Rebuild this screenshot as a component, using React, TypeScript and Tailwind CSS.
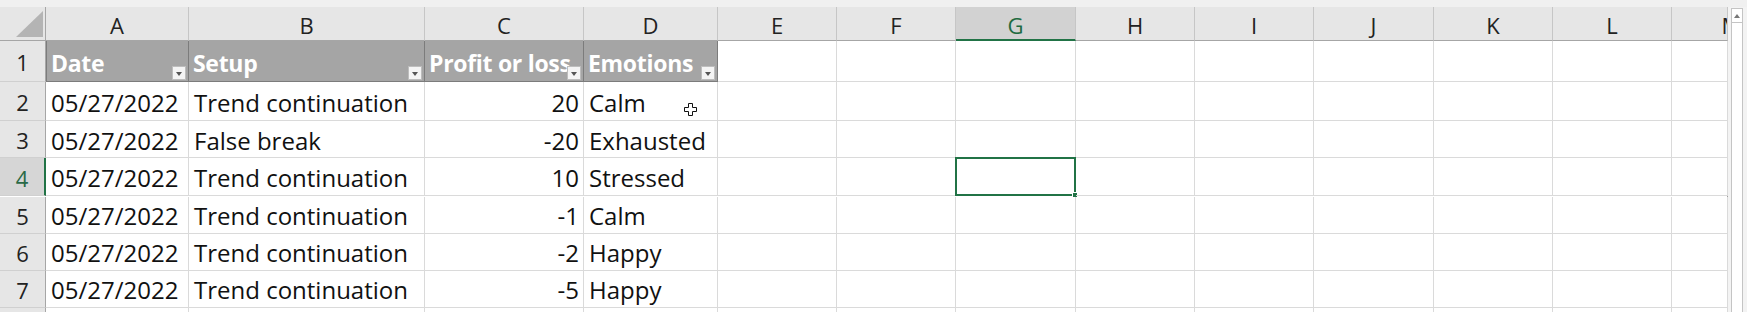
import React from "react";

const columns = [
  { label: "A", w: 143 },
  { label: "B", w: 236 },
  { label: "C", w: 159 },
  { label: "D", w: 134 },
  { label: "E", w: 119 },
  { label: "F", w: 119 },
  { label: "G", w: 120 },
  { label: "H", w: 119 },
  { label: "I", w: 119 },
  { label: "J", w: 120 },
  { label: "K", w: 119 },
  { label: "L", w: 119 },
  { label: "M", w: 56 },
];

const headers = ["Date", "Setup", "Profit or loss", "Emotions"];

const trades = [
  ["05/27/2022", "Trend continuation", "20", "Calm"],
  ["05/27/2022", "False break", "-20", "Exhausted"],
  ["05/27/2022", "Trend continuation", "10", "Stressed"],
  ["05/27/2022", "Trend continuation", "-1", "Calm"],
  ["05/27/2022", "Trend continuation", "-2", "Happy"],
  ["05/27/2022", "Trend continuation", "-5", "Happy"],
];

const rowHeights = ["h-[39px]", "h-[37px]", "h-[38px]", "h-[37px]", "h-[37px]", "h-[37px]"];

export default function App() {
  return (
    <div className="w-[1747px] h-[312px] overflow-hidden bg-[#f3f3f3] font-['Open_Sans',sans-serif] text-[#111]">
      <div className="h-[7px] bg-[#f0f0f0]" />
      <div className="flex">
        <div className="grid w-[1728px] grid-cols-[46px_143px_236px_159px_134px_119px_119px_120px_119px_119px_120px_119px_119px_56px] border-r border-[#9e9e9e] bg-white">
          {/* column headers */}
          <div className="relative h-[34px] bg-[#e6e6e6] border-r border-b border-[#a6a6a6]">
            <svg className="absolute left-[16px] top-[4px]" width="28" height="27" viewBox="0 0 28 27">
              <polygon points="0,26 27,26 27,0" fill="#b4b4b4" />
            </svg>
          </div>
          {columns.map((c) => (
            <ColumnHeader key={c.label} label={c.label} selected={c.label === "G"} clip={c.label === "M"} />
          ))}

          {/* row 1: table header */}
          <RowNumber n={1} h="h-[41px]" />
          {headers.map((h, i) => (
            <div
              key={h}
              className={`relative h-[41px] bg-[#a5a5a5] border-r border-b border-[#7c7c7c] overflow-hidden ${i === 0 ? "border-l" : ""}`}
            >
              <div className="pl-[4px] pt-[7px] text-[23px] font-bold text-white whitespace-nowrap leading-[30px] tracking-[-0.3px]">
                {h}
              </div>
              <FilterButton />
            </div>
          ))}
          {columns.slice(4).map((c) => (
            <div key={c.label} className="h-[41px] border-r border-b border-[#dadada]" />
          ))}

          {/* rows 2-7 */}
          {trades.map((t, r) => (
            <React.Fragment key={r}>
              <RowNumber n={r + 2} h={rowHeights[r]} selected={r === 2} />
              <Cell h={rowHeights[r]}>{t[0]}</Cell>
              <Cell h={rowHeights[r]}>{t[1]}</Cell>
              <Cell h={rowHeights[r]} right>
                {t[2]}
              </Cell>
              <Cell h={rowHeights[r]}>
                {t[3]}
                {r === 0 && <CursorPlus />}
              </Cell>
              {columns.slice(4).map((c) => (
                <div key={c.label} className={`relative ${rowHeights[r]} border-r border-b border-[#dadada]`}>
                  {r === 2 && c.label === "G" && (
                    <div className="absolute -left-[1px] -top-[1px] -right-[1px] -bottom-[1px] border-2 border-[#217346]">
                      <div className="absolute -right-[4px] -bottom-[4px] w-[6px] h-[6px] bg-[#217346] border border-white" />
                    </div>
                  )}
                </div>
              ))}
            </React.Fragment>
          ))}

          {/* row 8, cut off */}
          <div className="h-[5px] bg-[#e6e6e6] border-r border-[#a6a6a6]" />
          {columns.map((c) => (
            <div key={c.label} className="h-[5px] border-r border-[#dadada]" />
          ))}
        </div>

        {/* vertical scrollbar */}
        <div className="ml-[3px] w-[12px] h-[305px] mt-[1px] bg-white border border-[#c4c4c4] flex flex-col">
          <div className="h-[14px] border-b border-[#c4c4c4] flex items-center justify-center">
            <svg width="6" height="4" viewBox="0 0 6 4">
              <polygon points="0,4 6,4 3,0" fill="#777" />
            </svg>
          </div>
        </div>
      </div>
    </div>
  );
}

function ColumnHeader({ label, selected, clip }: { label: string; selected?: boolean; clip?: boolean }) {
  return (
    <div
      className={`h-[34px] overflow-hidden border-r border-[#c6c6c6] ${
        selected ? "bg-[#d2d2d2] border-b-2 border-b-[#217346] text-[#1e6b41]" : "bg-[#e6e6e6] border-b border-b-[#a6a6a6] text-[#222]"
      }`}
    >
      <div className={`${clip ? "w-[119px]" : "w-full"} text-center text-[22px] leading-[34px] pt-[1px]`}>{label}</div>
    </div>
  );
}

function RowNumber({ n, h, selected }: { n: number; h: string; selected?: boolean }) {
  return (
    <div
      className={`${h} flex items-center justify-center pt-[3px] text-[22px] border-b border-[#d0d0d0] ${
        selected ? "bg-[#d6d6d6] text-[#2a6a47] border-r-2 border-r-[#217346]" : "bg-[#e6e6e6] text-[#222] border-r border-r-[#a6a6a6]"
      }`}
    >
      {n}
    </div>
  );
}

function Cell({ h, right, children }: { h: string; right?: boolean; children: React.ReactNode }) {
  return (
    <div
      className={`relative ${h} flex items-center pt-[3px] border-r border-b border-[#dadada] text-[24px] whitespace-nowrap ${
        right ? "justify-end pr-[4px]" : "pl-[5px]"
      }`}
    >
      {children}
    </div>
  );
}

function FilterButton() {
  return (
    <div className="absolute right-[2px] bottom-[1px] w-[14px] h-[14px] bg-[#f4f4f4] border border-[#bdbdbd] flex items-end justify-center pb-[3px]">
      <svg width="6" height="4" viewBox="0 0 6 4">
        <polygon points="0,0 6,0 3,4" fill="#555" />
      </svg>
    </div>
  );
}

function CursorPlus() {
  return (
    <svg className="absolute left-[100px] top-[21px]" width="13" height="13" viewBox="0 0 13 13">
      <path d="M4.5 0.5h4v4h4v4h-4v4h-4v-4h-4v-4h4z" fill="white" stroke="#111" strokeWidth="1" />
    </svg>
  );
}
